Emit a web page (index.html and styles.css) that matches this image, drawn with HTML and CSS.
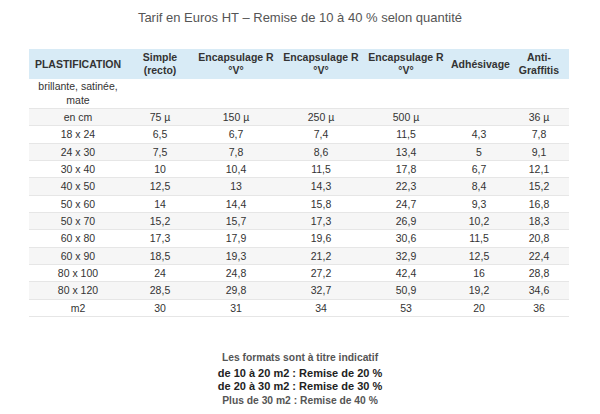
FILE: index.html
```html
<!DOCTYPE html>
<html lang="fr">
<head>
<meta charset="utf-8">
<title>Tarif</title>
<link rel="stylesheet" href="styles.css">
</head>
<body>
<div class="page">
  <h1 class="title">Tarif en Euros HT – Remise de 10 à 40 % selon quantité</h1>
  <table class="tarif">
    <colgroup>
      <col class="c1"><col class="c2"><col class="c3"><col class="c4"><col class="c5"><col class="c6"><col class="c7">
    </colgroup>
    <thead>
      <tr>
        <th>PLASTIFICATION</th>
        <th>Simple (recto)</th>
        <th>Encapsulage R °V°</th>
        <th>Encapsulage R °V°</th>
        <th>Encapsulage R °V°</th>
        <th>Adhésivage</th>
        <th>Anti-Graffitis</th>
      </tr>
    </thead>
    <tbody>
      <tr class="tall"><td>brillante, satinée, mate</td><td></td><td></td><td></td><td></td><td></td><td></td></tr>
      <tr><td>en cm</td><td>75 µ</td><td>150 µ</td><td>250 µ</td><td>500 µ</td><td></td><td>36 µ</td></tr>
      <tr><td>18 x 24</td><td>6,5</td><td>6,7</td><td>7,4</td><td>11,5</td><td>4,3</td><td>7,8</td></tr>
      <tr><td>24 x 30</td><td>7,5</td><td>7,8</td><td>8,6</td><td>13,4</td><td>5</td><td>9,1</td></tr>
      <tr><td>30 x 40</td><td>10</td><td>10,4</td><td>11,5</td><td>17,8</td><td>6,7</td><td>12,1</td></tr>
      <tr><td>40 x 50</td><td>12,5</td><td>13</td><td>14,3</td><td>22,3</td><td>8,4</td><td>15,2</td></tr>
      <tr><td>50 x 60</td><td>14</td><td>14,4</td><td>15,8</td><td>24,7</td><td>9,3</td><td>16,8</td></tr>
      <tr><td>50 x 70</td><td>15,2</td><td>15,7</td><td>17,3</td><td>26,9</td><td>10,2</td><td>18,3</td></tr>
      <tr><td>60 x 80</td><td>17,3</td><td>17,9</td><td>19,6</td><td>30,6</td><td>11,5</td><td>20,8</td></tr>
      <tr><td>60 x 90</td><td>18,5</td><td>19,3</td><td>21,2</td><td>32,9</td><td>12,5</td><td>22,4</td></tr>
      <tr><td>80 x 100</td><td>24</td><td>24,8</td><td>27,2</td><td>42,4</td><td>16</td><td>28,8</td></tr>
      <tr><td>80 x 120</td><td>28,5</td><td>29,8</td><td>32,7</td><td>50,9</td><td>19,2</td><td>34,6</td></tr>
      <tr><td>m2</td><td>30</td><td>31</td><td>34</td><td>53</td><td>20</td><td>36</td></tr>
    </tbody>
  </table>
  <div class="notes">
    <p class="note small first">Les formats sont à titre indicatif</p>
    <p class="note big second">de 10 à 20 m2 : Remise de 20 %</p>
    <p class="note big third">de 20 à 30 m2 : Remise de 30 %</p>
    <p class="note small fourth">Plus de 30 m2 : Remise de 40 %</p>
  </div>
</div>
</body>
</html>
```
FILE: styles.css
```css
html, body {
  margin: 0;
  padding: 0;
  background: #ffffff;
}
body {
  font-family: "Liberation Sans", Arial, Helvetica, sans-serif;
  color: #333333;
}
.page {
  width: 600px;
  padding-top: 10px;
}
.title {
  margin: 0 0 23px 0;
  font-size: 13px;
  line-height: 16px;
  font-weight: normal;
  color: #555555;
  text-align: center;
}
.tarif {
  margin-left: 29px;
  width: 540px;
  table-layout: fixed;
  border-collapse: collapse;
  font-size: 10.5px;
}
.c1 { width: 98px; }
.c2 { width: 66px; }
.c3 { width: 86px; }
.c4 { width: 84px; }
.c5 { width: 86px; }
.c6 { width: 60px; }
.c7 { width: 60px; }
.tarif th {
  background: #d8ebf6;
  color: #333333;
  font-weight: bold;
  line-height: 13px;
  height: 26px;
  padding: 2px 2px;
  text-align: center;
  vertical-align: middle;
}
.tarif td {
  text-align: center;
  vertical-align: middle;
  padding: 2px 2px;
  line-height: 12.33px;
  border-bottom: 1px solid #e6e6e6;
  color: #333333;
}
.tarif tr.tall td {
  line-height: 13.5px;
  padding: 1px 2px;
}
.tarif tbody tr:nth-child(even) td {
  background: #f6f6f6;
}
.notes {
  margin-top: 33px;
  text-align: center;
}
.note {
  margin: 0;
  font-weight: bold;
}
.small {
  font-size: 10.3px;
  color: #555555;
}
.big {
  font-size: 11px;
  color: #222222;
}
.first { line-height: 15px; }
.second { line-height: 16px; }
.third { line-height: 11px; }
.fourth { line-height: 18px; }
```
